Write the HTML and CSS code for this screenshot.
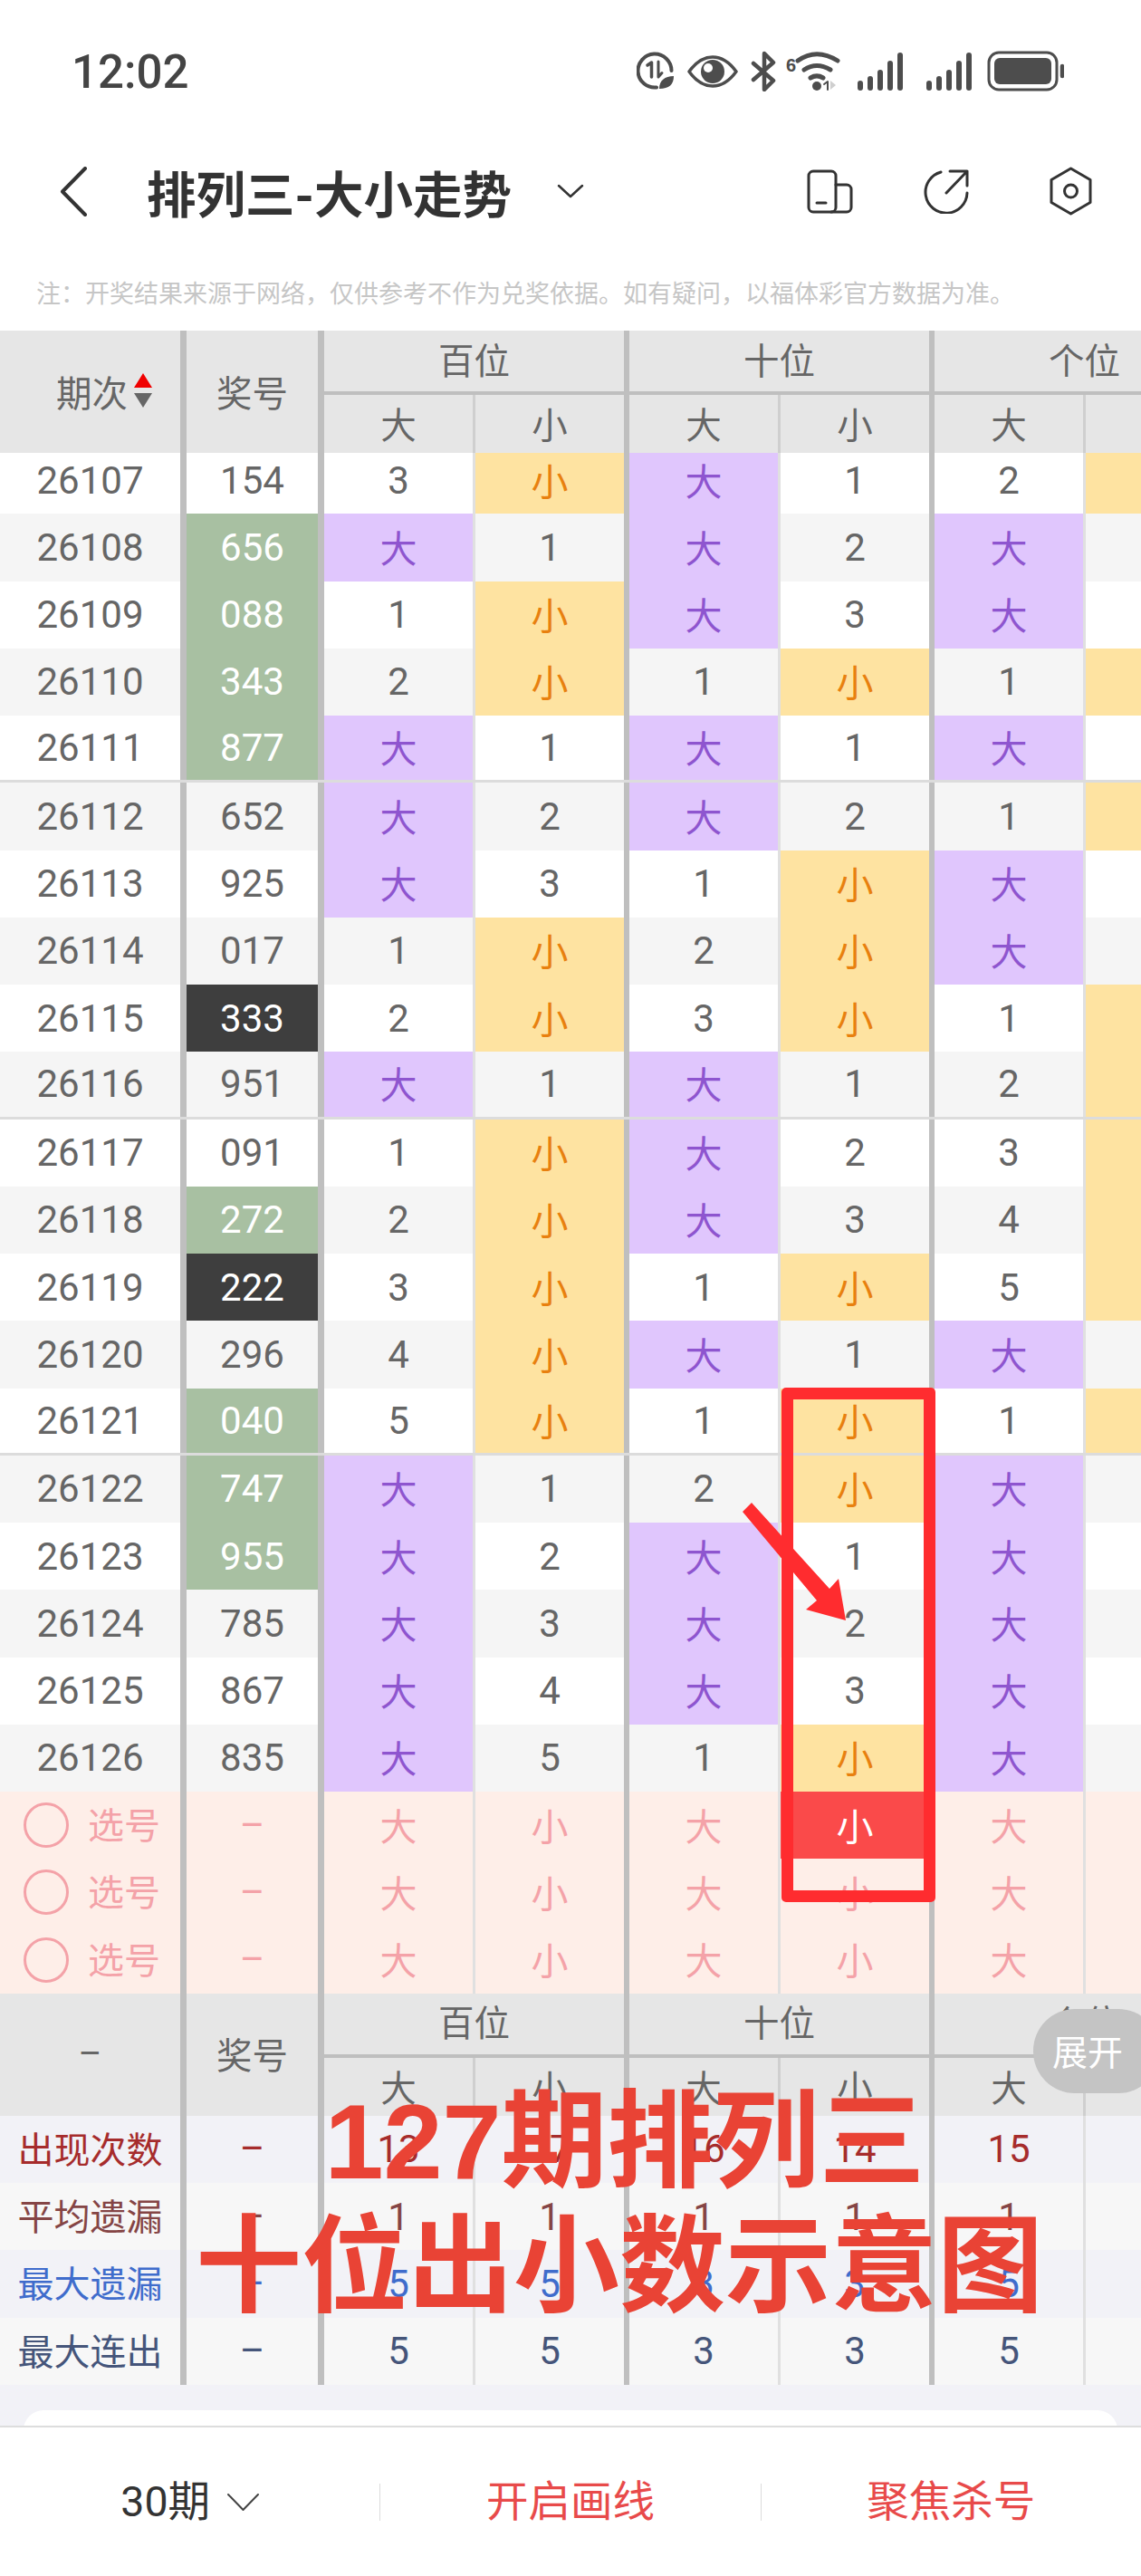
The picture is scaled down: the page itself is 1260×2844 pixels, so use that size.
FILE: index.html
```html
<!DOCTYPE html>
<html lang="zh-CN">
<head>
<meta charset="utf-8">
<title>排列三-大小走势</title>
<link rel="stylesheet" href="styles.css">
</head>
<body>
<div class="status">
  <span class="time">12:02</span>
  <svg class="status-icons" width="472" height="46" viewBox="0 0 472 46" fill="none" stroke="#4d4d4d" stroke-width="4" stroke-linecap="round" stroke-linejoin="round">
    <path d="M22 41.500A18.500 18.500 0 1 1 38.500 23"/>
    <path d="M12 17l4.500-3v16" stroke-width="3.500"/>
    <path d="M24 13v17l4-4.500" stroke-width="3"/>
    <path d="M25 43c0-9 6-14 16-14 0 9-5 14-16 14z" fill="#4d4d4d" stroke="none"/>
    <path d="M58 24c8-11 16-16 26-16s18 5 26 16c-8 11-16 16-26 16S66 35 58 24z" stroke-width="3.500"/>
    <circle cx="84" cy="24" r="13" fill="#4d4d4d" stroke="none"/>
    <circle cx="79" cy="20" r="5" fill="#fff" stroke="none"/>
    <path d="M129 15l22 19-10 10V4l10 10-22 19" stroke-width="4.500"/>
    <text class="wifi-six" x="165" y="24">6</text>
    <path d="M178 12c14-10 28-10 44 0M185 22c9-6 19-6 29 0M192 31c5-3 9-3 14 0" stroke-width="5"/>
    <circle cx="199" cy="40" r="5" fill="#4d4d4d" stroke="none"/>
    <path d="M207 38l4-3v9" stroke-width="2"/>
    <path d="M214 34l6 5-6 5z" fill="#cfcfcf" stroke="none"/>
    <g stroke-width="6">
      <path d="M247 37v5M258 32v10M269 25v17M280 15v27M291 6v36"/>
      <path d="M323 37v5M334 32v10M345 25v17M356 15v27M367 6v36"/>
    </g>
    <rect x="389" y="3" width="75" height="41" rx="11" stroke-width="3"/>
    <rect x="395" y="9" width="63" height="29" rx="6" fill="#4d4d4d" stroke="none"/>
    <path d="M470 18v11" stroke-width="4.500"/>
  </svg>
</div>

<div class="nav">
  <svg class="back" width="30" height="55" viewBox="0 0 30 55" fill="none" stroke="#333" stroke-width="4" stroke-linecap="round" stroke-linejoin="round"><path d="M28 2L3 27.500 28 53"/></svg>
  <h1 class="title">排列三-大小走势</h1>
  <svg class="caret" width="30" height="16" viewBox="0 0 30 16" fill="none" stroke="#333" stroke-width="2.500" stroke-linecap="round" stroke-linejoin="round"><path d="M2 2l13 12L28 2"/></svg>
  <div class="nav-tools">
    <svg class="tool-device" width="51" height="49" viewBox="0 0 51 49" fill="none" stroke="#333" stroke-width="3" stroke-linecap="round" stroke-linejoin="round"><rect x="2" y="2" width="30" height="45" rx="5"/><path d="M32 17h12a5 5 0 0 1 5 5v20a5 5 0 0 1-5 5H27M11 37h10"/></svg>
    <svg class="tool-share" width="50" height="50" viewBox="0 0 50 50" fill="none" stroke="#333" stroke-width="3" stroke-linecap="round" stroke-linejoin="round"><path d="M19 4A23 23 0 1 0 48 27M25 27L48 3M29 3h19v16"/></svg>
    <svg width="47" height="54" viewBox="0 0 47 54" fill="none" stroke="#333" stroke-width="3" stroke-linejoin="round"><path d="M23.500 2L45 14.500v25L23.500 52 2 39.500v-25z"/><circle cx="23.500" cy="27" r="7"/></svg>
  </div>
</div>

<p class="note">注：开奖结果来源于网络，仅供参考不作为兑奖依据。如有疑问，以福体彩官方数据为准。</p>

<div class="thead sticky">
  <div class="hcell c-id sort-head"><span>期次</span><span class="sort"><i class="up"></i><i class="down"></i></span></div>
  <div class="hcell c-no">奖号</div>
  <div class="hgroup"><div class="hname">百位</div><div class="hsubs"><span class="hsub a">大</span><span class="hsub z">小</span></div></div>
  <div class="hgroup"><div class="hname">十位</div><div class="hsubs"><span class="hsub a">大</span><span class="hsub z">小</span></div></div>
  <div class="hgroup"><div class="hname">个位</div><div class="hsubs"><span class="hsub a">大</span><span class="hsub z">小</span></div></div>
</div>

<div class="rows">
  <div class="row"><div class="cell c-id">26107</div><div class="cell c-no">154</div><div class="cell a">3</div><div class="cell z small">小</div><div class="cell a big">大</div><div class="cell z">1</div><div class="cell a">2</div><div class="cell z small">小</div></div>
  <div class="row alt"><div class="cell c-id">26108</div><div class="cell c-no green">656</div><div class="cell a big">大</div><div class="cell z">1</div><div class="cell a big">大</div><div class="cell z">2</div><div class="cell a big">大</div><div class="cell z">1</div></div>
  <div class="row"><div class="cell c-id">26109</div><div class="cell c-no green">088</div><div class="cell a">1</div><div class="cell z small">小</div><div class="cell a big">大</div><div class="cell z">3</div><div class="cell a big">大</div><div class="cell z">2</div></div>
  <div class="row alt"><div class="cell c-id">26110</div><div class="cell c-no green">343</div><div class="cell a">2</div><div class="cell z small">小</div><div class="cell a">1</div><div class="cell z small">小</div><div class="cell a">1</div><div class="cell z small">小</div></div>
  <div class="row end"><div class="cell c-id">26111</div><div class="cell c-no green">877</div><div class="cell a big">大</div><div class="cell z">1</div><div class="cell a big">大</div><div class="cell z">1</div><div class="cell a big">大</div><div class="cell z">1</div></div>
  <div class="row alt"><div class="cell c-id">26112</div><div class="cell c-no">652</div><div class="cell a big">大</div><div class="cell z">2</div><div class="cell a big">大</div><div class="cell z">2</div><div class="cell a">1</div><div class="cell z small">小</div></div>
  <div class="row"><div class="cell c-id">26113</div><div class="cell c-no">925</div><div class="cell a big">大</div><div class="cell z">3</div><div class="cell a">1</div><div class="cell z small">小</div><div class="cell a big">大</div><div class="cell z">1</div></div>
  <div class="row alt"><div class="cell c-id">26114</div><div class="cell c-no">017</div><div class="cell a">1</div><div class="cell z small">小</div><div class="cell a">2</div><div class="cell z small">小</div><div class="cell a big">大</div><div class="cell z">2</div></div>
  <div class="row"><div class="cell c-id">26115</div><div class="cell c-no dark">333</div><div class="cell a">2</div><div class="cell z small">小</div><div class="cell a">3</div><div class="cell z small">小</div><div class="cell a">1</div><div class="cell z small">小</div></div>
  <div class="row alt end"><div class="cell c-id">26116</div><div class="cell c-no">951</div><div class="cell a big">大</div><div class="cell z">1</div><div class="cell a big">大</div><div class="cell z">1</div><div class="cell a">2</div><div class="cell z small">小</div></div>
  <div class="row"><div class="cell c-id">26117</div><div class="cell c-no">091</div><div class="cell a">1</div><div class="cell z small">小</div><div class="cell a big">大</div><div class="cell z">2</div><div class="cell a">3</div><div class="cell z small">小</div></div>
  <div class="row alt"><div class="cell c-id">26118</div><div class="cell c-no green">272</div><div class="cell a">2</div><div class="cell z small">小</div><div class="cell a big">大</div><div class="cell z">3</div><div class="cell a">4</div><div class="cell z small">小</div></div>
  <div class="row"><div class="cell c-id">26119</div><div class="cell c-no dark">222</div><div class="cell a">3</div><div class="cell z small">小</div><div class="cell a">1</div><div class="cell z small">小</div><div class="cell a">5</div><div class="cell z small">小</div></div>
  <div class="row alt"><div class="cell c-id">26120</div><div class="cell c-no">296</div><div class="cell a">4</div><div class="cell z small">小</div><div class="cell a big">大</div><div class="cell z">1</div><div class="cell a big">大</div><div class="cell z">1</div></div>
  <div class="row end"><div class="cell c-id">26121</div><div class="cell c-no green">040</div><div class="cell a">5</div><div class="cell z small">小</div><div class="cell a">1</div><div class="cell z small">小</div><div class="cell a">1</div><div class="cell z small">小</div></div>
  <div class="row alt"><div class="cell c-id">26122</div><div class="cell c-no green">747</div><div class="cell a big">大</div><div class="cell z">1</div><div class="cell a">2</div><div class="cell z small">小</div><div class="cell a big">大</div><div class="cell z">1</div></div>
  <div class="row"><div class="cell c-id">26123</div><div class="cell c-no green">955</div><div class="cell a big">大</div><div class="cell z">2</div><div class="cell a big">大</div><div class="cell z">1</div><div class="cell a big">大</div><div class="cell z">2</div></div>
  <div class="row alt"><div class="cell c-id">26124</div><div class="cell c-no">785</div><div class="cell a big">大</div><div class="cell z">3</div><div class="cell a big">大</div><div class="cell z">2</div><div class="cell a big">大</div><div class="cell z">3</div></div>
  <div class="row"><div class="cell c-id">26125</div><div class="cell c-no">867</div><div class="cell a big">大</div><div class="cell z">4</div><div class="cell a big">大</div><div class="cell z">3</div><div class="cell a big">大</div><div class="cell z">4</div></div>
  <div class="row alt"><div class="cell c-id">26126</div><div class="cell c-no">835</div><div class="cell a big">大</div><div class="cell z">5</div><div class="cell a">1</div><div class="cell z small">小</div><div class="cell a big">大</div><div class="cell z">5</div></div>

  <div class="row pick"><div class="cell c-id pick-id"><i class="ring"></i><span>选号</span></div><div class="cell c-no">–</div><div class="cell a cjk">大</div><div class="cell z cjk">小</div><div class="cell a cjk">大</div><div class="cell z cjk on">小</div><div class="cell a cjk">大</div><div class="cell z cjk">小</div></div>
  <div class="row pick"><div class="cell c-id pick-id"><i class="ring"></i><span>选号</span></div><div class="cell c-no">–</div><div class="cell a cjk">大</div><div class="cell z cjk">小</div><div class="cell a cjk">大</div><div class="cell z cjk">小</div><div class="cell a cjk">大</div><div class="cell z cjk">小</div></div>
  <div class="row pick"><div class="cell c-id pick-id"><i class="ring"></i><span>选号</span></div><div class="cell c-no">–</div><div class="cell a cjk">大</div><div class="cell z cjk">小</div><div class="cell a cjk">大</div><div class="cell z cjk">小</div><div class="cell a cjk">大</div><div class="cell z cjk">小</div></div>
</div>

<div class="thead">
  <div class="hcell c-id">–</div>
  <div class="hcell c-no">奖号</div>
  <div class="hgroup"><div class="hname">百位</div><div class="hsubs"><span class="hsub a">大</span><span class="hsub z">小</span></div></div>
  <div class="hgroup"><div class="hname">十位</div><div class="hsubs"><span class="hsub a">大</span><span class="hsub z">小</span></div></div>
  <div class="hgroup"><div class="hname">个位</div><div class="hsubs"><span class="hsub a">大</span><span class="hsub z">小</span></div></div>
</div>

<div class="stats">
  <div class="row stat s1"><div class="cell c-id">出现次数</div><div class="cell c-no">–</div><div class="cell a">13</div><div class="cell z">17</div><div class="cell a">16</div><div class="cell z">14</div><div class="cell a">15</div><div class="cell z">15</div></div>
  <div class="row stat s2"><div class="cell c-id">平均遗漏</div><div class="cell c-no">–</div><div class="cell a">1</div><div class="cell z">1</div><div class="cell a">1</div><div class="cell z">1</div><div class="cell a">1</div><div class="cell z">1</div></div>
  <div class="row stat s3"><div class="cell c-id">最大遗漏</div><div class="cell c-no">–</div><div class="cell a">5</div><div class="cell z">5</div><div class="cell a">3</div><div class="cell z">3</div><div class="cell a">5</div><div class="cell z">5</div></div>
  <div class="row stat s4"><div class="cell c-id">最大连出</div><div class="cell c-no">–</div><div class="cell a">5</div><div class="cell z">5</div><div class="cell a">3</div><div class="cell z">3</div><div class="cell a">5</div><div class="cell z">5</div></div>
</div>

<div class="tail"><div class="tail-card"></div></div>

<div class="footer">
  <div class="fitem period">30期<svg width="35" height="21" viewBox="0 0 35 21" fill="none" stroke="#444" stroke-width="2" stroke-linecap="round" stroke-linejoin="round"><path d="M1 2l16.500 17L34 2"/></svg></div>
  <div class="fitem action">开启画线</div>
  <div class="fitem action">聚焦杀号</div>
</div>

<div class="expand">展开</div>
<div class="mark-box"></div>
<svg class="mark-arrow" width="120" height="135" viewBox="0 0 120 135"><path d="M10 0L96 95 106 84 114 130 70 118 82 108 0 10z" fill="#ff2c2f"/></svg>
<div class="caption"><div class="cap-one">127期排列三</div><div class="cap-two">十位出小数示意图</div></div>
</body>
</html>
```
FILE: styles.css
```css
* { box-sizing: border-box; }
html, body { margin: 0; padding: 0; }
body {
  position: relative;
  width: 1260px;
  height: 2844px;
  overflow: hidden;
  background: #fff;
  font-family: Roboto, "Noto Sans CJK SC", sans-serif;
  color: #666;
}

.status {
  height: 156px;
  display: flex;
  align-items: center;
  justify-content: space-between;
  padding: 0 85px 0 79px;
}
.time { font-size: 51px; font-weight: 500; color: #444; padding-top: 2px; }
.wifi-six { font: 700 20px "Liberation Sans", sans-serif; fill: #4d4d4d; stroke: none; }

.nav {
  height: 110px;
  display: flex;
  align-items: center;
  padding: 0 54px 0 66px;
}
.back { margin-right: 66px; }
.title { margin: 0; font-size: 54.5px; font-weight: 700; color: #333; }
.caret { margin-left: 50px; }
.nav-tools { margin-left: auto; display: flex; align-items: center; gap: 89px; }
.tool-device { margin-right: -11px; }

.note {
  height: 99px;
  margin: 0;
  padding: 40px 0 0 40px;
  font-size: 27px;
  line-height: 38px;
  color: #c6c6c6;
  white-space: nowrap;
}

.thead {
  height: 135px;
  display: flex;
  background: #e6e6e6;
  font-size: 39.5px;
  width: 1370px;
}
.sticky { position: relative; z-index: 1; }
.hcell {
  height: 135px;
  padding-bottom: 3px;
  display: flex;
  align-items: center;
  justify-content: center;
  border-right: 7px solid #bfbfbf;
}
.c-id { width: 206px; flex: none; }
.c-no { width: 152px; flex: none; }
.sort-head { justify-content: flex-start; padding-left: 62px; gap: 7px; }
.sort { display: flex; flex-direction: column; gap: 6px; }
.sort i { display: block; width: 0; height: 0; border-left: 10px solid transparent; border-right: 10px solid transparent; }
.sort .up { border-bottom: 16px solid #f00000; }
.sort .down { border-top: 16px solid #666; }

.hgroup { width: 337px; flex: none; border-right: 6px solid #bfbfbf; }
.hname { height: 71px; padding-bottom: 7px; display: flex; align-items: center; justify-content: center; border-bottom: 4px solid #bfbfbf; }
.hsubs { display: flex; height: 64px; }
.hsub { display: flex; align-items: center; justify-content: center; padding-bottom: 3px; }
.hsub.a { width: 167px; border-right: 3px solid #cfcfcf; }
.hsub.z { width: 164px; }

.rows { margin-top: -7px; }
.row {
  width: 1370px;
  height: 74.25px;
  display: flex;
  background: #fff;
  font-size: 42px;
}
.row.alt { background: #f5f5f5; }
.row.end { border-bottom: 3px solid #dcdcdc; }
.cell {
  height: 100%;
  display: flex;
  align-items: center;
  justify-content: center;
}
.cell.c-id { border-right: 7px solid #bfbfbf; }
.cell.c-no { border-right: 7px solid #bfbfbf; }
.cell.a { width: 167px; flex: none; border-right: 3px solid #e0e0e0; }
.cell.z { width: 170px; flex: none; border-right: 6px solid #bfbfbf; }

.green { background: #a8c0a2; color: #fff; }
.dark { background: #3e3e3e; color: #fff; }
.big { background: #e0c6fd; color: #8e55cf; padding-bottom: 3px; font-size: 41px; }
.small { background: #fee3a1; color: #e8800f; padding-bottom: 3px; font-size: 41px; }

.pick { background: #feeee8; color: #f4a2a8; }
.cjk { padding-bottom: 3px; font-size: 41px; }
.pick-id { justify-content: flex-start; padding-left: 26px; gap: 21px; font-size: 40px; }
.pick-id span { padding-bottom: 4px; }
.ring { width: 50px; height: 50px; border: 3px solid #f4a2a8; border-radius: 50%; }
.cell.on { background: #fa4a4a; color: #fff; }

.stat { background: #f2f2f7; }
.stat:nth-child(even) { background: #f7f7f7; }
.stat .c-id { font-size: 40px; padding-bottom: 4px; }
.s1 { color: #a62c2c; }
.s2 { color: #854545; }
.s3 { color: #3f6ccc; }
.s4 { color: #45557a; }

.tail { height: 45px; padding: 28px 26px 0; background: #f2f2f7; overflow: hidden; }
.tail-card { height: 40px; background: #fff; border-radius: 22px 22px 0 0; }

.footer {
  height: 167px;
  display: flex;
  align-items: center;
  background: #fff;
  border-top: 2px solid #dddddd;
  font-size: 46.5px;
}
.fitem {
  flex: 1;
  height: 41px;
  display: flex;
  align-items: center;
  justify-content: center;
  gap: 19px;
  border-left: 1px solid #dcdcdc;
  line-height: 1;
}
.fitem.period { border-left: 0; color: #333; }
.fitem.action { color: #e84a4a; }

.expand {
  position: absolute;
  top: 2218px;
  left: 1141px;
  width: 140px;
  height: 93px;
  padding-left: 21px;
  padding-bottom: 4px;
  display: flex;
  align-items: center;
  border-radius: 46px;
  background: #c4c4c4;
  color: #fff;
  font-size: 39px;
}
.mark-box {
  position: absolute;
  top: 1532px;
  left: 863px;
  width: 170px;
  height: 568px;
  border: 13px solid #ff2c2f;
  border-radius: 5px;
}
.mark-arrow { position: absolute; top: 1659px; left: 820px; }
.caption {
  position: absolute;
  top: 2298px;
  left: 0;
  width: 1368px;
  text-align: center;
  font-size: 117px;
  line-height: 133px;
  font-weight: 700;
  font-family: "Liberation Sans", "Noto Sans CJK SC", sans-serif;
  color: #e94335;
}
.cap-one { padding-left: 12px; }
.cap-two { margin-top: 5px; }
```
